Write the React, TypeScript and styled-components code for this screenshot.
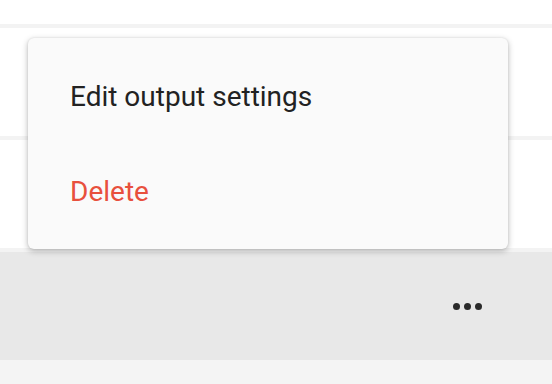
import React from "react";
import styled, { createGlobalStyle } from "styled-components";

const Global = createGlobalStyle`
  html, body { margin: 0; padding: 0; background: #f4f4f4; }
  body { font-family: Roboto, "Noto Sans", "Liberation Sans", sans-serif; }
`;

const Page = styled.div`
  position: relative;
  width: 552px;
  height: 384px;
  overflow: hidden;
  background: #f4f4f4;
  display: flex;
  flex-direction: column;
`;

const Row = styled.div<{ $h: number; $bg: string; $sep?: string }>`
  height: ${(p) => p.$h}px;
  background: ${(p) => p.$bg};
  border-bottom: 4px solid ${(p) => p.$sep ?? "#f3f3f3"};
  display: flex;
  align-items: center;
  justify-content: flex-end;
  padding-right: 70px;
  flex-shrink: 0;
`;

const MoreButton = styled.button`
  border: none;
  background: transparent;
  padding: 0;
  display: flex;
  gap: 4px;
  cursor: pointer;
`;

const Dot = styled.span`
  width: 7px;
  height: 7px;
  border-radius: 50%;
  background: #2a2a2a;
`;

const Menu = styled.div`
  position: absolute;
  left: 28px;
  top: 38px;
  width: 480px;
  height: 211px;
  box-sizing: border-box;
  background: #fafafa;
  border-radius: 6px;
  box-shadow: 0 2px 6px rgba(0, 0, 0, 0.28), 0 0 2px rgba(0, 0, 0, 0.1);
  padding: 11px 0 10px;
  display: flex;
  flex-direction: column;
`;

const MenuItem = styled.div<{ $danger?: boolean }>`
  height: 95px;
  display: flex;
  align-items: center;
  padding-left: 42px;
  font-size: 28px;
  color: ${(p) => (p.$danger ? "#e8503d" : "#222222")};
  cursor: pointer;
`;

export default function App() {
  return (
    <>
      <Global />
      <Page>
        <Row $h={24} $bg="#ffffff" />
        <Row $h={108} $bg="#ffffff" />
        <Row $h={108} $bg="#ffffff" />
        <Row $h={108} $bg="#e8e8e8" $sep="#f4f4f4">
          <MoreButton aria-label="More">
            <Dot />
            <Dot />
            <Dot />
          </MoreButton>
        </Row>
        <Menu>
          <MenuItem>Edit output settings</MenuItem>
          <MenuItem $danger>Delete</MenuItem>
        </Menu>
      </Page>
    </>
  );
}
